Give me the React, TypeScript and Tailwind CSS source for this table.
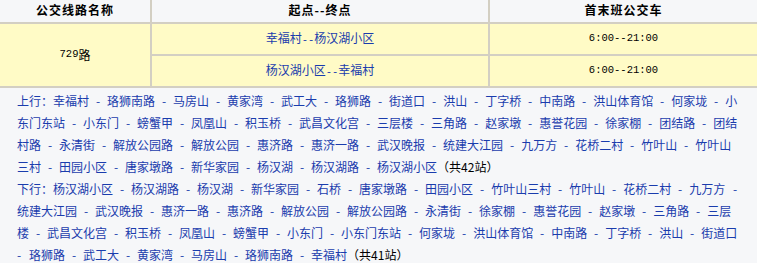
import React from 'react';

type Line = { stops: string[]; lead?: boolean; trail?: boolean; prefix?: string; count?: string };

const lines: Line[] = [
  { prefix: '上行：', stops: ['幸福村', '珞狮南路', '马房山', '黄家湾', '武工大', '珞狮路', '街道口', '洪山', '丁字桥', '中南路', '洪山体育馆', '何家垅', '小'] },
  { stops: ['东门东站', '小东门', '螃蟹甲', '凤凰山', '积玉桥', '武昌文化宫', '三层楼', '三角路', '赵家墩', '惠誉花园', '徐家棚', '团结路', '团结'] },
  { stops: ['村路', '永清街', '解放公园路', '解放公园', '惠济路', '惠济一路', '武汉晚报', '统建大江园', '九万方', '花桥二村', '竹叶山', '竹叶山'] },
  { stops: ['三村', '田园小区', '唐家墩路', '新华家园', '杨汉湖', '杨汉湖路', '杨汉湖小区'], count: '（共42站）' },
  { prefix: '下行：', stops: ['杨汉湖小区', '杨汉湖路', '杨汉湖', '新华家园', '石桥', '唐家墩路', '田园小区', '竹叶山三村', '竹叶山', '花桥二村', '九万方'], trail: true },
  { stops: ['统建大江园', '武汉晚报', '惠济一路', '惠济路', '解放公园', '解放公园路', '永清街', '徐家棚', '惠誉花园', '赵家墩', '三角路', '三层'] },
  { stops: ['楼', '武昌文化宫', '积玉桥', '凤凰山', '螃蟹甲', '小东门', '小东门东站', '何家垅', '洪山体育馆', '中南路', '丁字桥', '洪山', '街道口'] },
  { stops: ['珞狮路', '武工大', '黄家湾', '马房山', '珞狮南路', '幸福村'], lead: true, count: '（共41站）' },
];

const mono = "font-['Liberation_Mono',monospace] text-[10.5px]";

function Sep() {
  return <span className="inline-block w-[18px] text-center">-</span>;
}

function RouteLine({ line }: { line: Line }) {
  return (
    <div className="whitespace-nowrap h-[22px] text-[#1a3cad]">
      {line.lead && <span className="inline-block w-[12px] text-left">-</span>}
      {line.prefix && <span>{line.prefix}</span>}
      {line.stops.map((s, i) => (
        <React.Fragment key={i}>
          {i > 0 && <Sep />}
          <a href="#">{s}</a>
        </React.Fragment>
      ))}
      {line.trail && <span className="inline-block w-[12px] text-right">-</span>}
      {line.count && <span className="text-black">{line.count}</span>}
    </div>
  );
}

export default function App() {
  return (
    <div className="w-[757px] h-[263px] overflow-hidden bg-[#f6f7f9] font-['Noto_Sans_CJK_SC',sans-serif] text-[12px] text-black">
      <div className="grid grid-cols-[150px_336px_1fr] grid-rows-[22px_30px_30px] gap-[2px] bg-[#d3cfc3] pb-[2px]">
        <div className="bg-[#f6f7f9] flex items-center justify-center pb-[3px] font-bold tracking-[1px]">公交线路名称</div>
        <div className="bg-[#f6f7f9] flex items-center justify-center pb-[3px] font-bold tracking-[1px]">起点--终点</div>
        <div className="bg-[#f6f7f9] flex items-center justify-center pb-[3px] font-bold tracking-[1px]">首末班公交车</div>

        <div className="row-span-2 bg-[#fffbc6] flex items-center justify-center">
          <span className={mono}>729</span>路
        </div>
        <div className="bg-[#fffbc6] flex items-center justify-center text-[#1a3cad]">
          <a href="#">幸福村<span className={mono}>--</span>杨汉湖小区</a>
        </div>
        <div className="bg-[#fffbc6] flex items-center justify-center">
          <span className={mono}>6:00--21:00</span>
        </div>
        <div className="bg-[#fffbc6] flex items-center justify-center text-[#1a3cad]">
          <a href="#">杨汉湖小区<span className={mono}>--</span>幸福村</a>
        </div>
        <div className="bg-[#fffbc6] flex items-center justify-center">
          <span className={mono}>6:00--21:00</span>
        </div>
      </div>

      <div className="pl-[17px] pt-[2px] leading-[22px]">
        {lines.map((l, i) => (
          <RouteLine key={i} line={l} />
        ))}
      </div>
    </div>
  );
}
